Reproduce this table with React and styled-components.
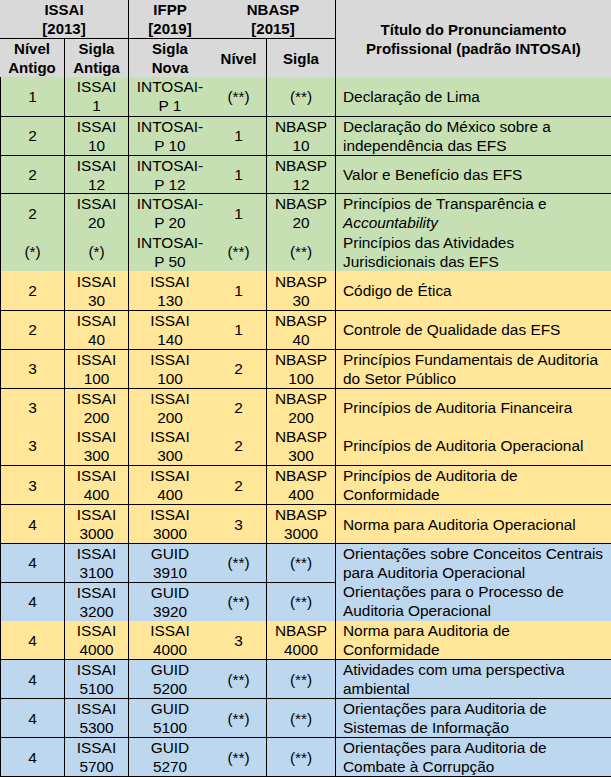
import React from "react";
import styled, { createGlobalStyle } from "styled-components";

const Global = createGlobalStyle`
  html, body { margin: 0; padding: 0; background: #ffffff; overflow: hidden; }
  body { font-family: "Liberation Sans", Arial, sans-serif; }
`;

const COLS = "64px 64px 83px 55px 69px 276px";

const TONES = {
  gray: "#d9d9d9",
  green: "#c6e0b4",
  yellow: "#ffe699",
  blue: "#bdd7ee",
};

const Table = styled.div`
  width: 611px;
  border-bottom: 1px solid #000;
  color: #000;
  font-size: 15.4px;
  line-height: 19px;
`;

const Head = styled.div`
  display: grid;
  grid-template-columns: ${COLS};
  grid-template-rows: 39px 38px;
  background: ${TONES.gray};
  font-weight: bold;
  font-size: 15px;
`;

const HeadCell = styled.div`
  grid-column: ${(p) => p.$col};
  grid-row: ${(p) => p.$row};
  display: flex;
  flex-direction: column;
  align-items: center;
  justify-content: center;
  text-align: center;
  white-space: nowrap;
  box-sizing: border-box;
  border-left: ${(p) => (p.$divider ? "1px solid #000" : "none")};
  border-bottom: ${(p) => (p.$under ? "1px solid #000" : "none")};
`;

const Row = styled.div`
  display: grid;
  grid-template-columns: ${COLS};
  height: 38.833px;
  background: ${(p) => TONES[p.$tone]};
`;

const Cell = styled.div`
  display: flex;
  flex-direction: column;
  justify-content: center;
  align-items: ${(p) => (p.$left ? "flex-start" : "center")};
  padding-left: ${(p) => (p.$left ? "7px" : "0")};
  text-align: ${(p) => (p.$left ? "left" : "center")};
  white-space: nowrap;
  box-sizing: border-box;
  border-left: ${(p) => (p.$divider ? "1px solid #000" : "none")};
  border-top: ${(p) => (p.$top ? "1px solid #000" : "none")};
`;

const Line = styled.span`
  display: block;
  font-style: ${(p) => (p.$italic ? "italic" : "normal")};
`;

const rows = [
  { tone: "green", top: false, a: ["1"], b: ["ISSAI", "1"], c: ["INTOSAI-", "P 1"], d: ["(**)"], e: ["(**)"], t: ["Declaração de Lima"] },
  { tone: "green", top: true, a: ["2"], b: ["ISSAI", "10"], c: ["INTOSAI-", "P 10"], d: ["1"], e: ["NBASP", "10"], t: ["Declaração do México sobre a", "independência das EFS"] },
  { tone: "green", top: true, a: ["2"], b: ["ISSAI", "12"], c: ["INTOSAI-", "P 12"], d: ["1"], e: ["NBASP", "12"], t: ["Valor e Benefício das EFS"] },
  { tone: "green", top: true, a: ["2"], b: ["ISSAI", "20"], c: ["INTOSAI-", "P 20"], d: ["1"], e: ["NBASP", "20"], t: ["Princípios de Transparência e", "*Accountability"] },
  { tone: "green", top: false, a: ["(*)"], b: ["(*)"], c: ["INTOSAI-", "P 50"], d: ["(**)"], e: ["(**)"], t: ["Princípios das Atividades", "Jurisdicionais das EFS"] },
  { tone: "yellow", top: false, a: ["2"], b: ["ISSAI", "30"], c: ["ISSAI", "130"], d: ["1"], e: ["NBASP", "30"], t: ["Código de Ética"] },
  { tone: "yellow", top: true, a: ["2"], b: ["ISSAI", "40"], c: ["ISSAI", "140"], d: ["1"], e: ["NBASP", "40"], t: ["Controle de Qualidade das EFS"] },
  { tone: "yellow", top: true, a: ["3"], b: ["ISSAI", "100"], c: ["ISSAI", "100"], d: ["2"], e: ["NBASP", "100"], t: ["Princípios Fundamentais de Auditoria", "do Setor Público"] },
  { tone: "yellow", top: true, a: ["3"], b: ["ISSAI", "200"], c: ["ISSAI", "200"], d: ["2"], e: ["NBASP", "200"], t: ["Princípios de Auditoria Financeira"] },
  { tone: "yellow", top: false, a: ["3"], b: ["ISSAI", "300"], c: ["ISSAI", "300"], d: ["2"], e: ["NBASP", "300"], t: ["Princípios de Auditoria Operacional"] },
  { tone: "yellow", top: true, a: ["3"], b: ["ISSAI", "400"], c: ["ISSAI", "400"], d: ["2"], e: ["NBASP", "400"], t: ["Princípios de Auditoria de", "Conformidade"] },
  { tone: "yellow", top: true, a: ["4"], b: ["ISSAI", "3000"], c: ["ISSAI", "3000"], d: ["3"], e: ["NBASP", "3000"], t: ["Norma para Auditoria Operacional"] },
  { tone: "blue", top: true, a: ["4"], b: ["ISSAI", "3100"], c: ["GUID", "3910"], d: ["(**)"], e: ["(**)"], t: ["Orientações sobre Conceitos Centrais", "para Auditoria Operacional"] },
  { tone: "blue", top: true, titleTop: false, a: ["4"], b: ["ISSAI", "3200"], c: ["GUID", "3920"], d: ["(**)"], e: ["(**)"], t: ["Orientações para o Processo de", "Auditoria Operacional"] },
  { tone: "yellow", top: false, a: ["4"], b: ["ISSAI", "4000"], c: ["ISSAI", "4000"], d: ["3"], e: ["NBASP", "4000"], t: ["Norma para Auditoria de", "Conformidade"] },
  { tone: "blue", top: true, a: ["4"], b: ["ISSAI", "5100"], c: ["GUID", "5200"], d: ["(**)"], e: ["(**)"], t: ["Atividades com uma perspectiva", "ambiental"] },
  { tone: "blue", top: true, a: ["4"], b: ["ISSAI", "5300"], c: ["GUID", "5100"], d: ["(**)"], e: ["(**)"], t: ["Orientações para Auditoria de", "Sistemas de Informação"] },
  { tone: "blue", top: true, a: ["4"], b: ["ISSAI", "5700"], c: ["GUID", "5270"], d: ["(**)"], e: ["(**)"], t: ["Orientações para Auditoria de", "Combate à Corrupção"] },
];

const Lines = ({ items }) =>
  items.map((s, i) =>
    s.startsWith("*") ? (
      <Line key={i} $italic>{s.slice(1)}</Line>
    ) : (
      <Line key={i}>{s}</Line>
    )
  );

export default function App() {
  return (
    <>
      <Global />
      <Table>
        <Head>
          <HeadCell $col="1 / span 2" $row="1" $under>
            <Line>ISSAI</Line>
            <Line>[2013]</Line>
          </HeadCell>
          <HeadCell $col="3" $row="1" $divider $under>
            <Line>IFPP</Line>
            <Line>[2019]</Line>
          </HeadCell>
          <HeadCell $col="4 / span 2" $row="1" $under>
            <Line>NBASP</Line>
            <Line>[2015]</Line>
          </HeadCell>
          <HeadCell $col="6" $row="1 / span 2" $divider>
            <Line>Título do Pronunciamento</Line>
            <Line>Profissional (padrão INTOSAI)</Line>
          </HeadCell>
          <HeadCell $col="1" $row="2">
            <Line>Nível</Line>
            <Line>Antigo</Line>
          </HeadCell>
          <HeadCell $col="2" $row="2" $divider>
            <Line>Sigla</Line>
            <Line>Antiga</Line>
          </HeadCell>
          <HeadCell $col="3" $row="2" $divider>
            <Line>Sigla</Line>
            <Line>Nova</Line>
          </HeadCell>
          <HeadCell $col="4" $row="2">
            <Line>Nível</Line>
          </HeadCell>
          <HeadCell $col="5" $row="2" $divider>
            <Line>Sigla</Line>
          </HeadCell>
        </Head>
        {rows.map((r, i) => (
          <Row key={i} $tone={r.tone}>
            <Cell $divider $top={r.top}><Lines items={r.a} /></Cell>
            <Cell $divider $top={r.top}><Lines items={r.b} /></Cell>
            <Cell $divider $top={r.top}><Lines items={r.c} /></Cell>
            <Cell $top={r.top}><Lines items={r.d} /></Cell>
            <Cell $divider $top={r.top}><Lines items={r.e} /></Cell>
            <Cell $divider $left $top={r.titleTop === false ? false : r.top}>
              <Lines items={r.t} />
            </Cell>
          </Row>
        ))}
      </Table>
    </>
  );
}
